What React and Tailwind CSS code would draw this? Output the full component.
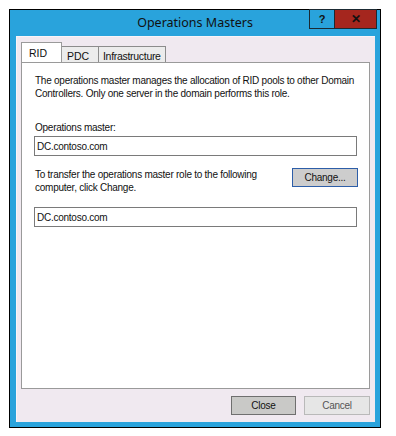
export default function App() {
  const ui = { fontFamily: '"Liberation Sans", Arial, sans-serif' }

  return (
    <div className="h-[436px] w-[396px] bg-white pl-[9px] pt-[9px]" style={ui}>
      <div className="flex h-[419px] w-[372px] flex-col border border-black bg-[#29a3dc]">
        {/* title bar */}
        <div className="relative flex h-[26px] shrink-0 items-center justify-center">
          <span
            className="text-[12.5px] text-[#111]"
            style={{ fontFamily: '"Noto Sans", "Open Sans", sans-serif' }}
          >
            Operations Masters
          </span>
          <div className="absolute right-[3px] top-[-1px] flex h-[20px]">
            <div className="flex w-[25px] items-center justify-center border border-r-0 border-[#1b2a33] bg-[#29a3dc] text-[11px] font-bold text-[#111]">
              ?
            </div>
            <div className="flex w-[43px] items-center justify-center border border-[#1b2a33] bg-[#a5261e] text-[12px] font-bold text-[#111]">
              ✕
            </div>
          </div>
        </div>

        {/* client area */}
        <div className="mb-[5px] ml-[6px] mr-[5px] flex flex-1 flex-col border-l border-t border-[#f8f4f8] bg-[#f0e9f0] px-[4px] pt-[5px]">
          {/* tabs */}
          <div className="flex h-[20px] items-end text-[10.5px] text-[#111]">
            <div className="relative z-10 flex h-[20px] w-[41px] items-start border border-b-0 border-[#9a9a9a] bg-white pl-[7px] pt-[3px]">
              RID
            </div>
            <div className="mb-[-1px] flex h-[17px] w-[37px] items-start border border-l-0 border-[#8c8c8c] bg-[#ececec] pl-[5px] pt-[2px]">
              PDC
            </div>
            <div className="mb-[-1px] flex h-[17px] w-[67px] items-start border border-l-0 border-[#8c8c8c] bg-[#ececec] pl-[4px] pt-[2px] tracking-[-0.3px]">
              Infrastructure
            </div>
          </div>

          {/* tab panel */}
          <div className="mr-[1px] flex h-[327px] flex-col border border-[#9a9a9a] bg-white px-[12px] pt-[11px] text-[10px] leading-[13px] tracking-[-0.25px] text-[#111]">
            <p className="whitespace-nowrap pl-[1px]">
              The operations master manages the allocation of RID pools to other Domain
              <br />
              Controllers. Only one server in the domain performs this role.
            </p>

            <p className="mt-[21px] pl-[1px]">Operations master:</p>
            <div className="mt-[2px] flex h-[20px] items-center border border-[#7a7a7a] bg-white px-[2px]">
              DC.contoso.com
            </div>

            <div className="mt-[12px] flex items-start justify-between">
              <p className="whitespace-nowrap pl-[1px]">
                To transfer the operations master role to the following
                <br />
                computer, click Change.
              </p>
              <div className="mr-[-1px] flex h-[19px] w-[66px] items-center justify-center border border-[#2d5ea8] bg-[#cdcdcd] text-[#111]">
                Change...
              </div>
            </div>

            <div className="mt-[13px] flex h-[20px] items-center border border-[#7a7a7a] bg-white px-[2px]">
              DC.contoso.com
            </div>
          </div>

          {/* buttons */}
          <div className="mt-[7px] flex justify-end gap-[8px] pr-[1px] text-[10px] tracking-[-0.25px]">
            <div className="flex h-[19px] w-[65px] items-center justify-center border border-[#6f6f6f] bg-[#c9c9c7] text-[#111]">
              Close
            </div>
            <div className="flex h-[19px] w-[66px] items-center justify-center border border-[#b9b9b9] bg-[#e6e6e6] text-[#555]">
              Cancel
            </div>
          </div>
        </div>
      </div>
    </div>
  )
}
